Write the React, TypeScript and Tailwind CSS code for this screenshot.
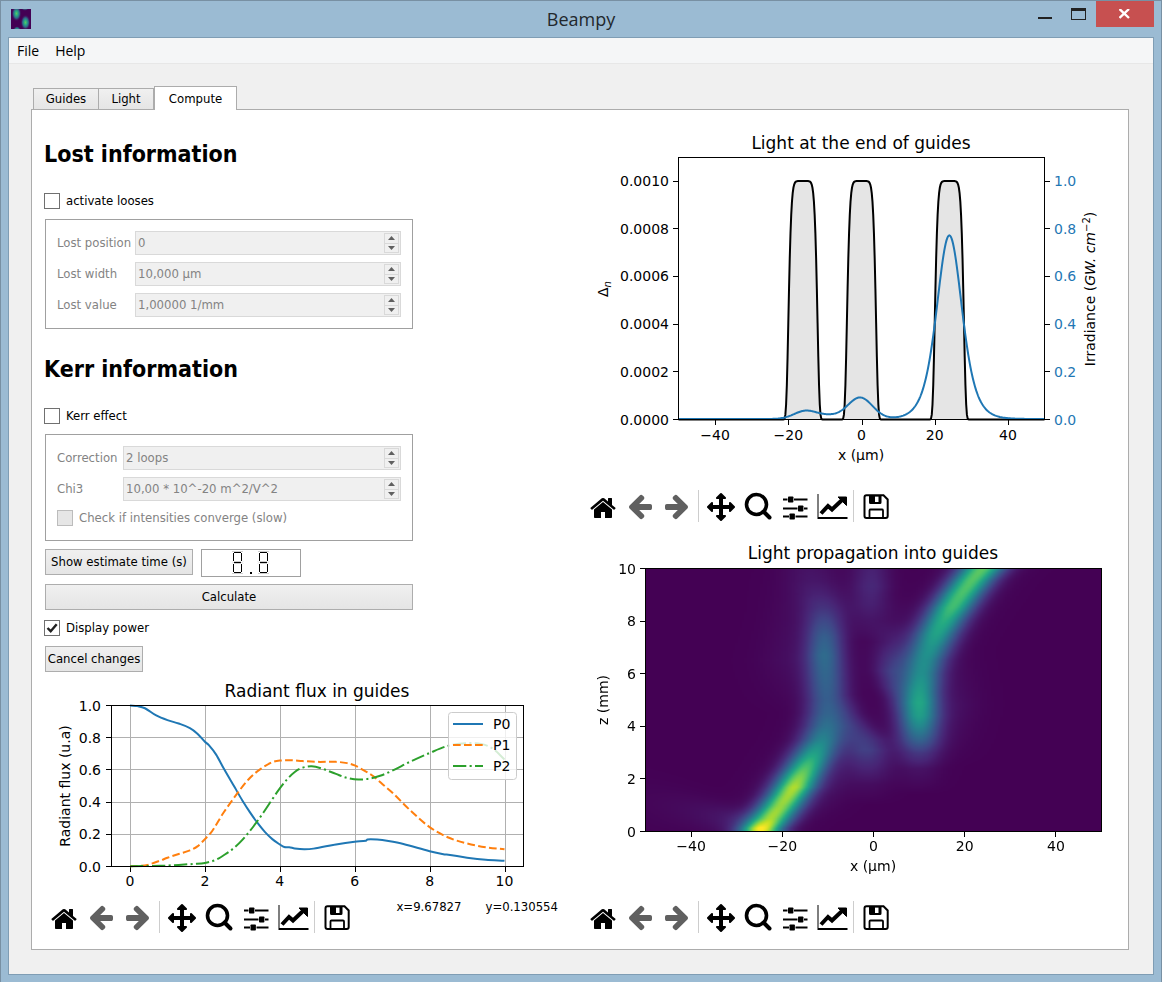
import { useEffect, useRef, type ReactNode } from "react";

type Point = [number, number];

const ui = "font-['DejaVu_Sans_Condensed','DejaVu_Sans',sans-serif]";

/* ---------- plot helpers ---------- */

function range(from: number, to: number, step: number): number[] {
  const out: number[] = [];
  for (let v = from; v <= to + step / 2; v += step) out.push(v);
  return out;
}

function polyline(points: Point[]): string {
  return points.map(([x, y], i) => `${i ? "L" : "M"}${x.toFixed(2)} ${y.toFixed(2)}`).join("");
}

function smooth(points: Point[]): string {
  let d = `M${points[0][0].toFixed(2)} ${points[0][1].toFixed(2)}`;
  for (let i = 0; i < points.length - 1; i++) {
    const p1 = points[i];
    const p2 = points[i + 1];
    const p0 = points[i - 1] ?? p1;
    const p3 = points[i + 2] ?? p2;
    const dx = p2[0] - p1[0];
    const m1 = (p2[1] - p0[1]) / (p2[0] - p0[0]);
    const m2 = (p3[1] - p1[1]) / (p3[0] - p1[0]);
    d += `C${(p1[0] + dx / 3).toFixed(2)} ${(p1[1] + (m1 * dx) / 3).toFixed(2)} ${(p2[0] - dx / 3).toFixed(2)} ${(p2[1] - (m2 * dx) / 3).toFixed(2)} ${p2[0].toFixed(2)} ${p2[1].toFixed(2)}`;
  }
  return d;
}

const minus = (v: number) => (v < 0 ? `−${-v}` : `${v}`);

function Plot({ label, height, children }: { label: string; height: number; children: ReactNode }) {
  return (
    <svg
      role="img"
      aria-label={label}
      viewBox={`0 0 539 ${height}`}
      className="block h-auto w-full font-['DejaVu_Sans',sans-serif] text-[14px]"
    >
      {children}
    </svg>
  );
}

/* ---------- light at the end of guides ---------- */

const ex = (v: number) => 98.5 + (v + 50) * 3.66;
const ey = (v: number) => 299.5 - v * 238.5;

const guideProfile = (x: number) =>
  [-16, 0, 24].reduce((sum, c) => sum + Math.exp(-Math.pow(Math.abs(x - c) / 4.05, 8)), 0);

const bell = (x: number, c: number, s: number) => Math.exp(-((x - c) ** 2) / (2 * s * s));

const irradiance = (x: number) =>
  0.68 / Math.cosh((x - 24) / 4.8) ** 2 +
  0.09 * bell(x, 24, 2.8) +
  0.09 * bell(x, -0.4, 3.4) +
  0.034 * bell(x, -15.3, 3.1) +
  0.012 * bell(x, -9, 3);

function EndOfGuides() {
  const xs = range(-50, 50, 0.2);
  const guides = polyline(xs.map((x) => [ex(x), ey(guideProfile(x))] as Point));
  const light = polyline(xs.map((x) => [ex(x), ey(irradiance(x)) - 0.5] as Point));
  return (
    <Plot label="Light at the end of guides" height={370}>
      <text x="281" y="29" textAnchor="middle" fontSize="17">Light at the end of guides</text>
      <path d={`${guides}Z`} fill="#e5e5e5" />
      <path d={guides} fill="none" stroke="#000" strokeWidth="2" />
      <path d={light} fill="none" stroke="#1f77b4" strokeWidth="2" />
      <rect x="98.5" y="37.5" width="366" height="262" fill="none" stroke="#000" />
      {[-40, -20, 0, 20, 40].map((v) => (
        <g key={v}>
          <path d={`M${Math.round(ex(v)) + 0.5} 300v5`} stroke="#000" />
          <text x={ex(v)} y="320" textAnchor="middle">{minus(v)}</text>
        </g>
      ))}
      {[0, 0.2, 0.4, 0.6, 0.8, 1].map((v) => (
        <g key={v}>
          <path d={`M98 ${Math.floor(ey(v)) + 0.5}h-5M465 ${Math.floor(ey(v)) + 0.5}h5`} stroke="#000" />
          <text x="89" y={ey(v) + 5} textAnchor="end">{(v / 1000).toFixed(4)}</text>
          <text x="474" y={ey(v) + 5} fill="#1f77b4">{v.toFixed(1)}</text>
        </g>
      ))}
      <text x="281" y="340" textAnchor="middle">x (µm)</text>
      <text transform="translate(28 169) rotate(-90)" textAnchor="middle">
        Δ<tspan dy="3" fontSize="10" fontStyle="italic">n</tspan>
      </text>
      <text transform="translate(515 169) rotate(-90)" textAnchor="middle">
        Irradiance (<tspan fontStyle="italic">GW. cm</tspan>
        <tspan dy="-5" fontSize="10">−2</tspan>
        <tspan dy="5">)</tspan>
      </text>
    </Plot>
  );
}

/* ---------- propagation map ---------- */

const viridis = [
  [68, 1, 84], [72, 36, 117], [65, 68, 135], [53, 95, 141], [42, 120, 142], [33, 145, 140],
  [34, 168, 132], [68, 191, 112], [122, 209, 81], [189, 223, 38], [253, 231, 37],
];

// Each beam: [z, centre, amplitude, sigma]
const beams: number[][][] = [
  [
    [0, -24.6, 0.98, 3], [0.15, -24.3, 1, 3], [0.5, -22.6, 0.87, 3.2], [1, -20.3, 0.84, 3.2], [1.4, -18.6, 0.86, 3.1],
    [1.7, -17.4, 0.88, 3.1], [2.1, -16.1, 0.8, 3.1], [2.5, -14.7, 0.7, 3.1], [3, -13, 0.56, 3.2], [3.5, -11.4, 0.44, 3.2],
    [4, -10.5, 0.36, 3.2], [4.5, -10.2, 0.31, 3.1], [5, -10.2, 0.29, 3], [6, -10.5, 0.32, 2.9], [6.7, -10.7, 0.34, 2.8],
    [7.4, -10.7, 0.29, 2.8], [8, -10.8, 0.21, 2.9], [8.5, -11, 0.14, 3.2], [9, -11.8, 0.09, 3.6], [9.5, -13, 0.06, 4],
    [10, -14, 0.05, 4.2],
  ],
  [
    [1.4, 10, 0, 3.4], [2.4, 10, 0.05, 3.3], [3, 10, 0.16, 3.2], [3.5, 10, 0.32, 3.1], [4, 10, 0.46, 3], [4.4, 10, 0.55, 3],
    [4.9, 10, 0.59, 2.9], [5.3, 10.1, 0.55, 2.9], [6, 10.6, 0.48, 3], [6.5, 11.3, 0.48, 3.1], [7, 12.5, 0.51, 3.2],
    [7.5, 13.8, 0.57, 3.2], [8, 15.4, 0.62, 3.2], [8.5, 17.2, 0.69, 3.2], [9, 19.2, 0.71, 3.2], [9.5, 21.4, 0.73, 3.2],
    [10, 23.9, 0.75, 3.3],
  ],
  [
    [1, -0.5, 0, 3.5], [1.8, -0.5, 0.03, 3.5], [2.4, -0.8, 0.09, 3.3], [3.1, -1.3, 0.17, 3.1], [3.5, -2.2, 0.15, 3.2],
    [4, -4.2, 0.11, 2.8], [4.5, -5.5, 0.06, 2.2], [5.2, -6, 0, 2],
  ],
  [
    [4.4, 5.5, 0, 1.6], [5, 5, 0.05, 1.8], [5.5, 4.4, 0.11, 2.2], [6.1, 4, 0.15, 2.5], [6.6, 4.2, 0.12, 2.8],
    [7.2, 4.5, 0.07, 3.2], [8, 4, 0.02, 4], [9, 4, 0, 4],
  ],
  [[7.2, -1, 0, 3.4], [8, -1, 0.04, 3.2], [8.6, -0.8, 0.08, 3], [9.3, -0.5, 0.11, 2.9], [10, -0.5, 0.09, 2.9]],
  [[2.5, 17, 0, 4], [4.8, 18, 0.03, 4], [7, 19, 0, 4]],
  [[4.5, -18, 0, 5], [6.5, -18, 0.03, 5], [8.5, -18, 0.02, 4], [10, -19, 0, 4]],
  [[0.4, -12, 0, 4], [2, -8, 0.03, 3.5], [3, -6, 0.03, 3], [4, -5, 0, 3]],
];

function field(x: number, z: number): number {
  let total = 0;
  for (const keys of beams) {
    if (z < keys[0][0] || z > keys[keys.length - 1][0]) continue;
    let i = 0;
    while (i < keys.length - 2 && z > keys[i + 1][0]) i++;
    const t = (z - keys[i][0]) / (keys[i + 1][0] - keys[i][0]);
    const mix = (k: number) => keys[i][k] + (keys[i + 1][k] - keys[i][k]) * t;
    const centre = mix(1);
    const sigma = mix(3);
    total += mix(2) * (0.93 * bell(x, centre, sigma) + 0.07 * bell(x, centre, sigma * 1.8));
  }
  if (x < -24) {
    const d = -24 - x;
    total += 0.12 * Math.exp(-d / 12) * (1 - Math.exp(-d / 3)) * bell(z, 0.2 + d * 0.035, 0.25 + d * 0.015);
  }
  return Math.min(1, total);
}

function PropagationMap() {
  const ref = useRef<HTMLCanvasElement>(null);
  useEffect(() => {
    const canvas = ref.current;
    const ctx = canvas?.getContext("2d");
    if (!canvas || !ctx) return;
    const { width, height } = canvas;
    const image = ctx.createImageData(width, height);
    for (let j = 0; j < height; j++) {
      for (let i = 0; i < width; i++) {
        const v = field(-50 + ((i + 0.5) / width) * 100, 10 - ((j + 0.5) / height) * 10) * 10;
        const k = Math.min(9, Math.floor(v));
        const at = (j * width + i) * 4;
        for (let c = 0; c < 3; c++) {
          image.data[at + c] = viridis[k][c] + (viridis[k + 1][c] - viridis[k][c]) * (v - k);
        }
        image.data[at + 3] = 255;
      }
    }
    ctx.putImageData(image, 0, 0);
  }, []);
  return <canvas ref={ref} width={200} height={263} className="block h-full w-full" />;
}

function Propagation() {
  const mx = (v: number) => 65.5 + (v + 50) * 4.56;
  const mz = (v: number) => 300.5 - v * 26.3;
  return (
    <Plot label="Light propagation into guides" height={370}>
      <text x="293" y="28" textAnchor="middle" fontSize="17">Light propagation into guides</text>
      <foreignObject x="65" y="37" width="457" height="264">
        <PropagationMap />
      </foreignObject>
      <rect x="65.5" y="37.5" width="456" height="263" fill="none" stroke="#000" />
      {[-40, -20, 0, 20, 40].map((v) => (
        <g key={v}>
          <path d={`M${Math.floor(mx(v)) + 0.5} 301v5`} stroke="#000" />
          <text x={mx(v)} y="320" textAnchor="middle">{minus(v)}</text>
        </g>
      ))}
      {[0, 2, 4, 6, 8, 10].map((v) => (
        <g key={v}>
          <path d={`M65 ${Math.floor(mz(v)) + 0.5}h-5`} stroke="#000" />
          <text x="56" y={mz(v) + 5} textAnchor="end">{v}</text>
        </g>
      ))}
      <text x="293" y="340" textAnchor="middle">x (µm)</text>
      <text transform="translate(28 169) rotate(-90)" textAnchor="middle">z (mm)</text>
    </Plot>
  );
}

/* ---------- radiant flux ---------- */

const p0: Point[] = [
  [0, 1], [0.2, 0.996], [0.4, 0.983], [0.7, 0.938], [1, 0.909], [1.3, 0.888], [1.6, 0.86], [1.8, 0.825], [2, 0.775], [2.1, 0.755],
  [2.3, 0.695], [2.5, 0.61], [2.8, 0.49], [3, 0.41], [3.2, 0.338], [3.4, 0.272], [3.6, 0.215], [3.8, 0.17], [4, 0.137],
  [4.12, 0.121], [4.25, 0.12], [4.4, 0.112], [4.65, 0.107], [4.9, 0.111], [5.5, 0.137], [6, 0.154], [6.3, 0.16], [6.34, 0.168],
  [6.6, 0.167], [6.9, 0.158], [7.3, 0.14], [8, 0.095], [8.4, 0.075], [8.5, 0.073], [9, 0.055], [9.5, 0.042], [10, 0.036],
];
const p1: Point[] = [
  [0, 0.002], [0.3, 0.004], [0.5, 0.012], [0.8, 0.036], [1, 0.054], [1.3, 0.078], [1.6, 0.1], [1.8, 0.125], [2, 0.17], [2.2, 0.222],
  [2.5, 0.335], [2.9, 0.465], [3.2, 0.55], [3.5, 0.608], [3.8, 0.648], [4, 0.658], [4.3, 0.66], [4.6, 0.655], [5, 0.65],
  [5.5, 0.65], [5.8, 0.642], [6, 0.628], [6.3, 0.59], [6.5, 0.56], [6.8, 0.5], [7, 0.46], [7.5, 0.345], [8, 0.245],
  [8.5, 0.18], [9, 0.143], [9.5, 0.12], [10, 0.107],
];
const p2: Point[] = [
  [0, 0.002], [0.8, 0.004], [1.3, 0.01], [1.7, 0.016], [2, 0.022], [2.3, 0.042], [2.6, 0.085], [2.8, 0.12], [3, 0.165],
  [3.3, 0.25], [3.6, 0.348], [3.8, 0.418], [4, 0.485], [4.2, 0.543], [4.4, 0.587], [4.6, 0.613], [4.85, 0.622], [5.1, 0.61],
  [5.5, 0.575], [5.8, 0.55], [6.1, 0.54], [6.4, 0.546], [6.7, 0.565], [7, 0.595], [7.5, 0.653], [8, 0.705], [8.5, 0.75],
  [9, 0.766], [9.4, 0.76], [9.7, 0.73], [10, 0.665],
];

const series = [
  { name: "P0", color: "#1f77b4", dash: undefined, data: p0 },
  { name: "P1", color: "#ff7f0e", dash: "7.7 3.3", data: p1 },
  { name: "P2", color: "#2ca02c", dash: "13.3 3.3 2.1 3.3", data: p2 },
];

function RadiantFlux() {
  const fx = (v: number) => 89 + v * 37.45;
  const fy = (v: number) => 190.5 - v * 161;
  return (
    <Plot label="Radiant flux in guides" height={225}>
      <text x="276" y="21" textAnchor="middle" fontSize="17">Radiant flux in guides</text>
      {[0, 2, 4, 6, 8, 10].map((v) => (
        <g key={v}>
          <path d={`M${Math.round(fx(v)) + 0.5} 30v160`} stroke="#b0b0b0" />
          <path d={`M${Math.round(fx(v)) + 0.5} 191v5`} stroke="#000" />
          <text x={fx(v)} y="210" textAnchor="middle">{v}</text>
        </g>
      ))}
      {[0, 0.2, 0.4, 0.6, 0.8, 1].map((v) => (
        <g key={v}>
          <path d={`M70 ${Math.floor(fy(v)) + 0.5}h412`} stroke="#b0b0b0" />
          <path d={`M70 ${Math.floor(fy(v)) + 0.5}h-5`} stroke="#000" />
          <text x="60" y={fy(v) + 5} textAnchor="end">{v.toFixed(1)}</text>
        </g>
      ))}
      {series.map((s) => (
        <path
          key={s.name}
          d={smooth(s.data.map(([x, y]) => [fx(x), fy(y)] as Point))}
          fill="none"
          stroke={s.color}
          strokeWidth="2"
          strokeDasharray={s.dash}
        />
      ))}
      <rect x="70.5" y="29.5" width="412" height="161" fill="none" stroke="#000" />
      <text transform="translate(29 110) rotate(-90)" textAnchor="middle">Radiant flux (u.a)</text>
      <rect x="407.5" y="36.5" width="68" height="67" rx="3" fill="#fff" fillOpacity="0.8" stroke="#ccc" />
      {series.map((s, i) => (
        <g key={s.name}>
          <path d={`M412 ${48 + i * 21}h30`} stroke={s.color} strokeWidth="2" strokeDasharray={s.dash} />
          <text x="452" y={53 + i * 21}>{s.name}</text>
        </g>
      ))}
    </Plot>
  );
}

/* ---------- plot toolbar ---------- */

function Glyph({ d, y, flip }: { d: string; y: number; flip?: boolean }) {
  return (
    <svg x="2" y={y} width="28" height="28" viewBox="0 0 1792 1792">
      <path d={d} transform={flip ? "translate(1792 0) scale(-1 1)" : undefined} />
    </svg>
  );
}

const homePath =
  "M1472 992v480q0 26-19 45t-45 19h-384v-384h-256v384h-384q-26 0-45-19t-19-45v-480q0-1 .5-3t.5-3l575-474 575 474q1 2 1 6zm223-69l-62 74q-8 9-21 11h-3q-13 0-21-7l-692-577-692 577q-12 8-24 7-13-2-21-11l-62-74q-8-10-7-23.5t11-21.5l719-599q32-26 76-26t76 26l244 204v-195q0-14 9-23t23-9h192q14 0 23 9t9 23v408l219 182q10 8 11 21.5t-7 23.5z";
const arrowPath =
  "M1664 896v128q0 53-32.5 90.5t-84.5 37.5h-704l293 294q38 36 38 90t-38 90l-75 76q-37 37-90 37-52 0-91-37l-651-652q-37-37-37-90 0-52 37-91l651-650q38-38 91-38 52 0 90 38l75 74q38 38 38 91t-38 91l-293 293h704q52 0 84.5 37.5t32.5 90.5z";
const movePath =
  "M1792 896q0 26-19 45l-256 256q-19 19-45 19t-45-19-19-45v-128h-384v384h128q26 0 45 19t19 45-19 45l-256 256q-19 19-45 19t-45-19l-256-256q-19-19-19-45t19-45 45-19h128v-384h-384v128q0 26-19 45t-45 19-45-19l-256-256q-19-19-19-45t19-45l256-256q19-19 45-19t45 19 19 45v128h384v-384h-128q-26 0-45-19t-19-45 19-45l256-256q19-19 45-19t45 19l256 256q19 19 19 45t-19 45-45 19h-128v384h384v-128q0-26 19-45t45-19 45 19l256 256q19 19 19 45z";

function ToolButton({ label, disabled, children }: { label: string; disabled?: boolean; children: ReactNode }) {
  return (
    <button
      type="button"
      aria-label={label}
      disabled={disabled}
      className="flex h-8 w-[37px] shrink-0 items-center justify-center text-black disabled:text-[#606060]"
    >
      <svg width="32" height="32" viewBox="0 0 32 32" fill="currentColor" aria-hidden="true">
        {children}
      </svg>
    </button>
  );
}

function PlotToolbar({ children }: { children?: ReactNode }) {
  return (
    <div role="toolbar" className="flex items-start pl-1">
      <ToolButton label="Home">
        <Glyph d={homePath} y={4} />
      </ToolButton>
      <ToolButton label="Back" disabled>
        <Glyph d={arrowPath} y={2} />
      </ToolButton>
      <ToolButton label="Forward" disabled>
        <Glyph d={arrowPath} y={2} flip />
      </ToolButton>
      <span className="mx-[3px] h-8 w-px shrink-0 bg-[#cdcdcd]" />
      <ToolButton label="Pan">
        <Glyph d={movePath} y={3} />
      </ToolButton>
      <ToolButton label="Zoom">
        <circle cx="14.500" cy="14.500" r="10" fill="none" stroke="currentColor" strokeWidth="3.600" />
        <path d="M21.500 21.500l6 6" stroke="currentColor" strokeWidth="4" strokeLinecap="round" />
      </ToolButton>
      <ToolButton label="Configure subplots">
        <path d="M4 8.500h4.500v2h-4.500zM15 8.500h13.500v2h-13.500zM4 17.500h14.500v2h-14.500zM25 17.500h3.500v2h-3.500zM4 25.500h6v2h-6zM16.500 25.500h12v2h-12z" />
        <rect x="9" y="6.500" width="5.400" height="6" rx=".8" />
        <rect x="19" y="15.500" width="5.400" height="6" rx=".8" />
        <rect x="10.500" y="23.500" width="5.400" height="6" rx=".8" />
      </ToolButton>
      <ToolButton label="Edit curves">
        <path d="M1.500 4h1v23h29v2h-30z" />
        <path d="M5 23.500l7-7.500 4 3.500 9.500-9" fill="none" stroke="currentColor" strokeWidth="4" />
        <path d="M22 7h8.500v8.500z" stroke="currentColor" strokeLinejoin="round" />
      </ToolButton>
      <span className="mx-[3px] h-8 w-px shrink-0 bg-[#cdcdcd]" />
      <ToolButton label="Save">
        <path
          d="M6.500 5.200h17l4.200 4.300v16.500a2 2 0 0 1-2 2h-19.200a2 2 0 0 1-2-2v-18.800a2 2 0 0 1 2-2z"
          fill="none"
          stroke="currentColor"
          strokeWidth="2"
        />
        <path d="M9 5h12.500v7.500a1.500 1.500 0 0 1-1.500 1.500h-9.500a1.500 1.500 0 0 1-1.500-1.500zM15 6.500v5.500h3.500v-5.500z" fillRule="evenodd" />
        <path d="M9.500 28v-7.500a1 1 0 0 1 1-1h11.500a1 1 0 0 1 1 1v7.500" fill="none" stroke="currentColor" strokeWidth="1.800" />
      </ToolButton>
      {children}
    </div>
  );
}

/* ---------- form controls ---------- */

function Check({ id, label, checked, disabled }: { id: string; label: string; checked?: boolean; disabled?: boolean }) {
  return (
    <div className="flex h-4 items-center gap-1.5">
      <span className="relative flex size-4">
        <input
          id={id}
          type="checkbox"
          defaultChecked={checked}
          disabled={disabled}
          className="peer size-4 appearance-none border border-[#707070] bg-white disabled:border-[#bcbcbc] disabled:bg-[#e6e6e6]"
        />
        <svg
          viewBox="0 0 16 16"
          aria-hidden="true"
          className="pointer-events-none absolute inset-0 hidden size-4 peer-checked:block"
        >
          <path d="M3.500 8l3.200 3.200 6-7" fill="none" stroke="#212121" strokeWidth="2.400" />
        </svg>
      </span>
      <label htmlFor={id} className={disabled ? "whitespace-nowrap text-[#838383]" : "whitespace-nowrap"}>
        {label}
      </label>
    </div>
  );
}

function Spin({ id, label, value }: { id: string; label: string; value: string }) {
  return (
    <>
      <label htmlFor={id} className="whitespace-nowrap text-[#838383]">
        {label}
      </label>
      <div className="flex h-6 items-center border border-[#d9d9d9] bg-[#f0f0f0] pr-px">
        <input id={id} disabled defaultValue={value} className="min-w-0 flex-1 px-0.5 text-[#838383]" />
        <span className="flex h-5 w-[15px] flex-col border border-[#d9d9d9]">
          <button type="button" disabled aria-label={`Increase ${label}`} className="flex flex-1 items-center justify-center border-b border-[#d9d9d9]">
            <svg width="7" height="4" viewBox="0 0 7 4" fill="#606060"><path d="M3.500 0L7 4H0z" /></svg>
          </button>
          <button type="button" disabled aria-label={`Decrease ${label}`} className="flex flex-1 items-center justify-center">
            <svg width="7" height="4" viewBox="0 0 7 4" fill="#606060"><path d="M0 0h7L3.500 4z" /></svg>
          </button>
        </span>
      </div>
    </>
  );
}

function PushButton({ className, children }: { className: string; children: ReactNode }) {
  return (
    <button
      type="button"
      className={`h-[26px] whitespace-nowrap border border-[#adadad] bg-linear-to-b from-[#f0f0f0] to-[#e5e5e5] ${className}`}
    >
      {children}
    </button>
  );
}

function Digit({ x }: { x: number }) {
  return (
    <g transform={`translate(${x} 0)`} fill="none">
      <path d="M0 1.500h11M0 11.500l1 1-1 1M11 11.500l-1 1 1 1M0 23.500h11M2 11.500h7M2 13.500h7" stroke="#cfcfcf" />
      <path d="M2 2.500h7M1.500 3v8M9.500 3v8M2 12.500h7M1.500 14v8M9.500 14v8M2 22.500h7" stroke="#000" />
    </g>
  );
}

function LcdNumber() {
  return (
    <div role="img" aria-label="0.0" className="flex h-7 w-[100px] items-center justify-center border border-[#a0a0a0]">
      <svg width="38" height="26" viewBox="0 0 38 26" aria-hidden="true">
        <Digit x={0} />
        <rect x="18" y="22" width="2" height="2" fill="#000" />
        <Digit x={26} />
      </svg>
    </div>
  );
}

/* ---------- window ---------- */

function AppIcon() {
  return (
    <svg width="20" height="20" viewBox="0 0 20 20" aria-hidden="true">
      <defs>
        <radialGradient id="spot">
          <stop offset="0" stopColor="#5ac864" />
          <stop offset=".3" stopColor="#28a884" />
          <stop offset=".6" stopColor="#2f6c8e" stopOpacity=".9" />
          <stop offset="1" stopColor="#440154" stopOpacity="0" />
        </radialGradient>
      </defs>
      <rect width="20" height="20" fill="#440154" />
      <ellipse cx="5.500" cy="4.500" rx="5" ry="8" fill="url(#spot)" />
      <ellipse cx="14.500" cy="13.500" rx="5" ry="8" fill="url(#spot)" />
      <ellipse cx="6" cy="21" rx="4" ry="4" fill="url(#spot)" />
      <ellipse cx="14" cy="-1" rx="4" ry="3" fill="url(#spot)" opacity=".6" />
    </svg>
  );
}

function TitleBar() {
  return (
    <header className="grid h-9 grid-cols-[1fr_auto_1fr] items-center">
      <div className="pl-[3px]">
        <AppIcon />
      </div>
      <h1 className="font-['Open_Sans',sans-serif] text-[18px] text-[#22282d]">Beampy</h1>
      <div className="flex self-start justify-self-end">
        <button type="button" aria-label="Minimize" className="flex h-[26px] w-[34px] items-center justify-center">
          <svg width="16" height="12" viewBox="0 0 16 12"><path d="M1 9h14v2H1z" fill="#222" /></svg>
        </button>
        <button type="button" aria-label="Maximize" className="flex h-[26px] w-[34px] items-center justify-center">
          <svg width="16" height="12" viewBox="0 0 16 12"><path d="M0 0h15v12H0zM1 3v8h13V3z" fill="#222" fillRule="evenodd" /></svg>
        </button>
        <button type="button" aria-label="Close" className="flex h-[26px] w-[58px] items-center justify-center bg-[#c75050]">
          <svg width="12" height="10" viewBox="0 0 12 10"><path d="M.500 0l9.500 9M10 0L.500 9" stroke="#fff" strokeWidth="2.400" /></svg>
        </button>
      </div>
    </header>
  );
}

const headingClass = "text-[23px] leading-8 font-bold";
const inactiveTab = "h-[21px] border border-b-0 border-[#acacac] bg-linear-to-b from-[#f0f0f0] to-[#e5e5e5]";

export default function App() {
  return (
    <div className={`flex min-h-screen flex-col border border-[#7890a3] bg-[#9bbbd3] px-[7px] pb-2 text-[13px] leading-4 text-black ${ui}`}>
      <TitleBar />
      <div className="flex flex-1 flex-col border border-[#7f9db4] bg-[#f0f0f0]">
        <nav className="flex h-[26px] items-center gap-4 border-b border-[#e7e7e7] bg-[#f5f6f7] px-2 font-['Open_Sans',sans-serif] text-[14px]">
          <button type="button">File</button>
          <button type="button">Help</button>
        </nav>

        <main className="flex flex-1 flex-col pt-[22px] pr-6 pb-6 pl-[22px]">
          <div role="tablist" className="z-10 -mb-px flex items-end pl-0.5">
            <button type="button" role="tab" aria-selected="false" className={`mb-px w-[66px] ${inactiveTab}`}>Guides</button>
            <button type="button" role="tab" aria-selected="false" className={`mb-px w-[55px] border-l-0 ${inactiveTab}`}>Light</button>
            <button type="button" role="tab" aria-selected="true" className="h-6 w-[83px] border border-b-0 border-[#acacac] bg-white">Compute</button>
          </div>

          <section role="tabpanel" className="grid flex-1 grid-cols-2 items-start border border-[#acacac] bg-white px-[9px] pb-4">
            <div className="pt-7">
              <div className="w-[372px] pl-[3px]">
                <h2 className={headingClass}>Lost information</h2>
                <div className="pt-[23px]">
                  <Check id="losses" label="activate looses" />
                </div>
                <fieldset disabled className="mt-2.5 ml-px grid grid-cols-[78px_1fr] items-center gap-y-[7px] border border-[#a0a0a0] px-[11px] py-[11px]">
                  <Spin id="lost-position" label="Lost position" value="0" />
                  <Spin id="lost-width" label="Lost width" value="10,000 µm" />
                  <Spin id="lost-value" label="Lost value" value="1,00000 1/mm" />
                </fieldset>

                <h2 className={`mt-6 ${headingClass}`}>Kerr information</h2>
                <div className="pt-[23px]">
                  <Check id="kerr" label="Kerr effect" />
                </div>
                <fieldset disabled className="mt-2.5 ml-px border border-[#a0a0a0] px-[11px] pt-[11px] pb-3.5">
                  <div className="grid grid-cols-[66px_1fr] items-center gap-y-[7px]">
                    <Spin id="correction" label="Correction" value="2 loops" />
                    <Spin id="chi3" label="Chi3" value="10,00 * 10^-20 m^2/V^2" />
                  </div>
                  <div className="pt-[9px]">
                    <Check id="converge" label="Check if intensities converge (slow)" disabled />
                  </div>
                </fieldset>

                <div className="mt-2 ml-px flex items-start gap-2">
                  <PushButton className="w-[148px]">Show estimate time (s)</PushButton>
                  <LcdNumber />
                </div>
                <div className="mt-[7px] ml-px flex">
                  <PushButton className="w-full">Calculate</PushButton>
                </div>
                <div className="py-2.5">
                  <Check id="power" label="Display power" checked />
                </div>
                <div className="ml-px flex">
                  <PushButton className="w-[98px]">Cancel changes</PushButton>
                </div>
              </div>
              <div className="pt-1">
                <RadiantFlux />
                <PlotToolbar>
                  <output className="ml-auto flex gap-6 pr-[22px] leading-3">
                    <span>x=9.67827</span>
                    <span>y=0.130554</span>
                  </output>
                </PlotToolbar>
              </div>
            </div>

            <div className="flex flex-col gap-[9px] pt-2.5">
              <div>
                <EndOfGuides />
                <PlotToolbar />
              </div>
              <div>
                <Propagation />
                <PlotToolbar />
              </div>
            </div>
          </section>
        </main>
      </div>
    </div>
  );
}
